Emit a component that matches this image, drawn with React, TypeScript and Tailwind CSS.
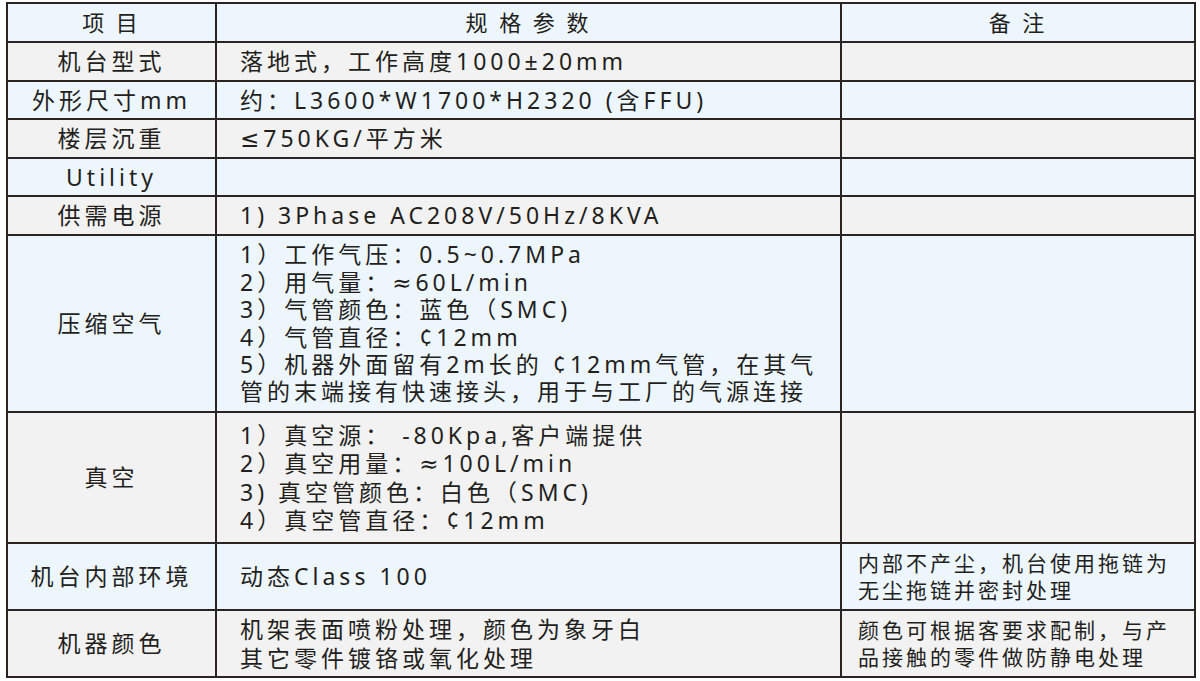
const cell = "border-r-2 border-b-2 border-[#2a2522] flex items-center";

type Row = {
  h: string;
  bg: string;
  item: string;
  spec: string[];
  note?: string[];
  specCls?: string;
};

const BLUE = "bg-[#eef6fd]";
const GRAY = "bg-[#f2f2f2]";

const rows: Row[] = [
  { h: "h-[39px]", bg: GRAY, item: "机台型式", spec: ["落地式，工作高度1000±20mm"] },
  { h: "h-[38px]", bg: BLUE, item: "外形尺寸mm", spec: ["约：L3600*W1700*H2320 (含FFU)"] },
  { h: "h-[39px]", bg: GRAY, item: "楼层沉重", spec: ["≤750KG/平方米"] },
  { h: "h-[38px]", bg: BLUE, item: "Utility", spec: [] },
  { h: "h-[39px]", bg: GRAY, item: "供需电源", spec: ["1) 3Phase AC208V/50Hz/8KVA"] },
  {
    h: "h-[177px]",
    bg: BLUE,
    item: "压缩空气",
    specCls: "leading-[27.4px]",
    spec: [
      "1）工作气压：0.5~0.7MPa",
      "2）用气量：≈60L/min",
      "3）气管颜色：蓝色（SMC)",
      "4）气管直径：¢12mm",
      "5）机器外面留有2m长的 ¢12mm气管，在其气",
      "管的末端接有快速接头，用于与工厂的气源连接",
    ],
  },
  {
    h: "h-[131px]",
    bg: GRAY,
    item: "真空",
    specCls: "leading-[28.4px]",
    spec: [
      "1）真空源： -80Kpa,客户端提供",
      "2）真空用量：≈100L/min",
      "3) 真空管颜色：白色（SMC)",
      "4）真空管直径：¢12mm",
    ],
  },
  {
    h: "h-[67px]",
    bg: BLUE,
    item: "机台内部环境",
    spec: ["动态Class 100"],
    note: ["内部不产尘，机台使用拖链为", "无尘拖链并密封处理"],
  },
  {
    h: "h-[67px]",
    bg: GRAY,
    item: "机器颜色",
    specCls: "leading-[29px]",
    spec: ["机架表面喷粉处理，颜色为象牙白", "其它零件镀铬或氧化处理"],
    note: ["颜色可根据客要求配制，与产", "品接触的零件做防静电处理"],
  },
];

export default function App() {
  return (
    <div
      className="min-h-screen bg-white pl-[6px] pt-[2px] text-[#231f1c]"
      style={{ fontFamily: '"Noto Sans", "DejaVu Sans", "Noto Sans CJK SC", sans-serif' }}
    >
      <div className="grid w-[1190px] grid-cols-[209px_625px_354px] border-l-2 border-t-2 border-[#2a2522]">
        {/* header */}
        <div className={`${cell} ${BLUE} h-[39px] justify-center text-[22px] tracking-[3px]`}>项 目</div>
        <div className={`${cell} ${BLUE} h-[39px] justify-center text-[22px] tracking-[3px]`}>规 格 参 数</div>
        <div className={`${cell} ${BLUE} h-[39px] justify-center text-[22px] tracking-[3px]`}>备 注</div>

        {rows.map((r) => (
          <Line key={r.item} r={r} />
        ))}
      </div>
    </div>
  );
}

function Line({ r }: { r: Row }) {
  return (
    <>
      <div className={`${cell} ${r.bg} ${r.h} justify-center text-[23px] tracking-[4px]`}>{r.item}</div>
      <div className={`${cell} ${r.bg} ${r.h} pl-[23px]`}>
        <div className={`text-[23px] tracking-[4px] ${r.specCls ?? "leading-[29px]"}`}>
          {r.spec.map((s) => (
            <div key={s} className="whitespace-pre">
              {s}
            </div>
          ))}
        </div>
      </div>
      <div className={`${cell} ${r.bg} ${r.h} pl-[16px]`}>
        {r.note && (
          <div className="text-[21px] tracking-[3px] leading-[27px]">
            {r.note.map((s) => (
              <div key={s} className="whitespace-pre">
                {s}
              </div>
            ))}
          </div>
        )}
      </div>
    </>
  );
}
